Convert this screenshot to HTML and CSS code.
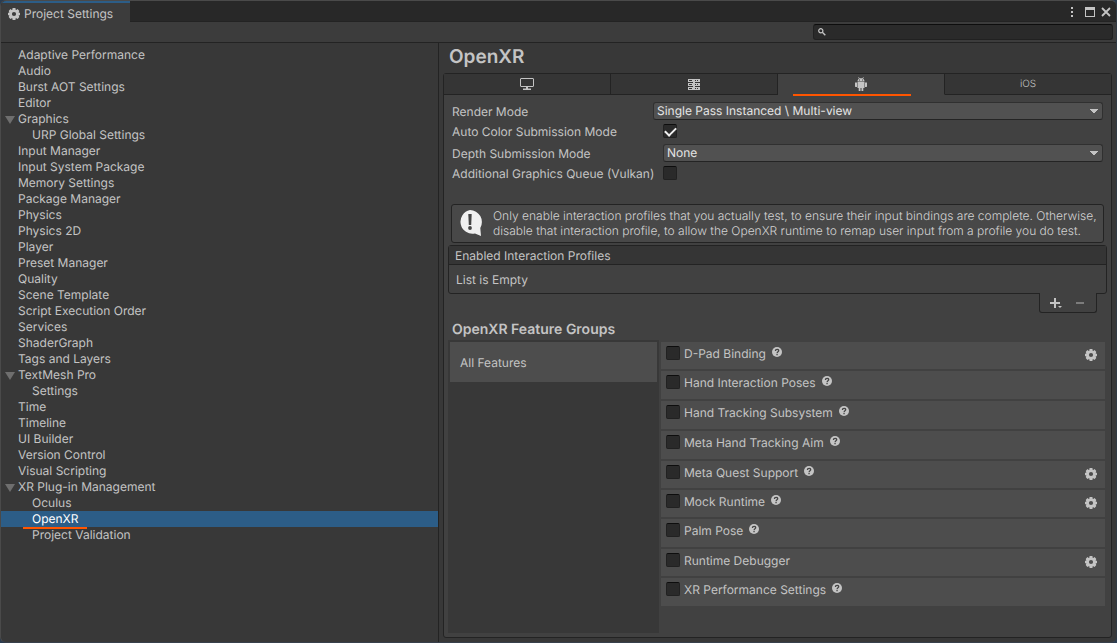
FILE: index.html
```html
<!DOCTYPE html>
<html lang="en">
<head>
<meta charset="utf-8">
<title>Project Settings</title>
<link rel="stylesheet" href="styles.css">
</head>
<body>
<svg class="defs" aria-hidden="true">
  <symbol id="gear" viewBox="0 0 12 12">
    <path fill="currentColor" fill-rule="evenodd" d="M4.500 0h3v1.500l.8.400 1.300-.8 1.700 2-.6 1.200.2.500H12v2.400h-1.100l-.2.600.6 1.300-1.700 1.900-1.300-.8-.8.300V12h-3v-1.500l-.8-.3-1.300.8L.700 9.100l.6-1.300-.2-.6H0V4.800h1.100l.2-.5L.700 3.100l1.700-2 1.300.8.800-.4zM6 3.900a2.100 2.100 0 1 0 0 4.200 2.100 2.100 0 0 0 0-4.200z"/>
  </symbol>
  <symbol id="help" viewBox="0 0 10 10">
    <circle cx="5" cy="5" r="5" fill="currentColor"/>
    <path d="M3.400 3.900C3.400 1.800 6.700 1.800 6.700 3.700 6.700 4.900 5.100 4.800 5.100 6.200" fill="none" stroke="#444" stroke-width="1.300"/>
    <path d="M4.400 7h1.300v1.300H4.400z" fill="#444"/>
  </symbol>
</svg>
<div class="window">
  <header class="titlebar">
    <div class="window-tab"><svg class="icon12"><use href="#gear"/></svg><span>Project Settings</span></div>
    <div class="window-buttons">
      <button type="button" aria-label="Menu"><svg width="4" height="12" viewBox="0 0 4 12"><path fill="currentColor" d="M1 1h2v2H1zM1 5h2v2H1zM1 9h2v2H1z"/></svg></button>
      <button type="button" aria-label="Maximize"><svg width="10" height="10" viewBox="0 0 10 10"><path fill="currentColor" fill-rule="evenodd" d="M0 0h10v10H0zM1 3v6h8V3z"/></svg></button>
      <button type="button" aria-label="Close"><svg width="10" height="10" viewBox="0 0 10 10"><path d="M1 1l8 8M9 1L1 9" stroke="currentColor" stroke-width="1.800"/></svg></button>
    </div>
  </header>
  <div class="toolbar">
    <label class="search"><svg width="8" height="8" viewBox="0 0 8 8"><circle cx="2.800" cy="2.800" r="2.100" fill="none" stroke="currentColor" stroke-width="1.200"/><path d="M4.300 4.300l3 3" stroke="currentColor" stroke-width="1.400"/></svg><input type="text" aria-label="Search settings"></label>
  </div>
  <div class="body">
    <nav class="sidebar">
      <a href="#">Adaptive Performance</a>
      <a href="#">Audio</a>
      <a href="#">Burst AOT Settings</a>
      <a href="#">Editor</a>
      <a href="#" class="group">Graphics</a>
      <a href="#" class="child">URP Global Settings</a>
      <a href="#">Input Manager</a>
      <a href="#">Input System Package</a>
      <a href="#">Memory Settings</a>
      <a href="#">Package Manager</a>
      <a href="#">Physics</a>
      <a href="#">Physics 2D</a>
      <a href="#">Player</a>
      <a href="#">Preset Manager</a>
      <a href="#">Quality</a>
      <a href="#">Scene Template</a>
      <a href="#">Script Execution Order</a>
      <a href="#">Services</a>
      <a href="#">ShaderGraph</a>
      <a href="#">Tags and Layers</a>
      <a href="#" class="group">TextMesh Pro</a>
      <a href="#" class="child">Settings</a>
      <a href="#">Time</a>
      <a href="#">Timeline</a>
      <a href="#">UI Builder</a>
      <a href="#">Version Control</a>
      <a href="#">Visual Scripting</a>
      <a href="#" class="group">XR Plug-in Management</a>
      <a href="#" class="child">Oculus</a>
      <a href="#" class="child selected" aria-current="page">OpenXR</a>
      <a href="#" class="child">Project Validation</a>
    </nav>
    <main class="content">
      <h1>OpenXR</h1>
      <section class="panel">
        <div class="tabs" role="tablist">
          <button type="button" role="tab" aria-label="Standalone"><svg width="14" height="12" viewBox="0 0 14 12"><path fill="currentColor" fill-rule="evenodd" d="M1 0h12l1 1v7l-1 1H8v1.500h3V12H3v-1.500h3V9H1L0 8V1zM1 1v7h12V1z"/></svg></button>
          <button type="button" role="tab" aria-label="Dedicated server"><svg width="12" height="11" viewBox="0 0 12 11"><path fill="currentColor" d="M0 0h12v3H0zM0 4h12v3H0zM0 8h12v3H0zM5 3h2v5H5z"/><path stroke="#353535" d="M1 1.500h3M1 5.500h3M1 9.500h3M7 1.500h1M9 1.500h1M7 5.500h1M9 5.500h1M7 9.500h1M9 9.500h1"/></svg></button>
          <button type="button" role="tab" aria-label="Android" class="active" aria-selected="true"><svg width="12" height="14" viewBox="0 0 12 14"><path fill="currentColor" d="M2.500 4.500C2.500 3 3.200 2 4 1.500L3.200.2l.5-.2.800 1.200h3L8.300 0l.5.2L8 1.500c.8.5 1.500 1.500 1.500 3zM2.500 5h7v6H8.300v3H6.500v-3h-1v3H3.700v-3H2.500zM0 5.500h2V10H.5L0 9.500zM10 5.500h2v4l-.5.500H10z"/><path fill="#414141" d="M4 2.600h1v1H4zM7 2.600h1v1H7z"/></svg></button>
          <button type="button" role="tab" class="ios">iOS</button>
        </div>
        <div class="fields">
          <div class="field"><label for="render">Render Mode</label><div class="control wide"><select id="render"><option>Single Pass Instanced \ Multi-view</option></select></div></div>
          <div class="field check"><label for="color">Auto Color Submission Mode</label><div class="control"><input type="checkbox" id="color" checked></div></div>
          <div class="field"><label for="depth">Depth Submission Mode</label><div class="control"><select id="depth"><option>None</option></select></div></div>
          <div class="field check"><label for="queue">Additional Graphics Queue (Vulkan)</label><div class="control"><input type="checkbox" id="queue"></div></div>
        </div>
        <div class="info">
          <svg width="26" height="28" viewBox="0 0 26 28"><path fill="#f0f0f0" d="M13 1a12 12 0 0 1 10.300 18L24 27l-6-2.500A12 12 0 1 1 13 1z"/><path fill="#444" d="M11.300 5h3.400l-.5 11h-2.400z"/><circle cx="13" cy="19" r="1.900" fill="#444"/></svg>
          <p>Only enable interaction profiles that you actually test, to ensure their input bindings are complete. Otherwise, disable that interaction profile, to allow the OpenXR runtime to remap user input from a profile you do test.</p>
        </div>
        <div class="profiles">
          <div class="profiles-head">Enabled Interaction Profiles</div>
          <div class="profiles-body">List is Empty</div>
        </div>
        <div class="profiles-foot">
          <button type="button" aria-label="Add profile"><svg width="12" height="12" viewBox="0 0 12 12"><path fill="currentColor" d="M4 1h2v4h4v2H6v4H4V7H0V5h4zM8 9h4l-2 2z"/></svg></button>
          <button type="button" aria-label="Remove profile" disabled><svg width="8" height="12" viewBox="0 0 8 12"><path fill="currentColor" d="M0 5h8v2H0z"/></svg></button>
        </div>
        <h2>OpenXR Feature Groups</h2>
        <div class="features">
          <div class="groups"><button type="button">All Features</button></div>
          <ul class="feature-list">
            <li class="has-settings"><label><input type="checkbox">D-Pad Binding</label><svg class="help"><use href="#help"/></svg><button type="button" aria-label="D-Pad Binding settings"><svg class="icon12"><use href="#gear"/></svg></button></li>
            <li><label><input type="checkbox">Hand Interaction Poses</label><svg class="help"><use href="#help"/></svg></li>
            <li><label><input type="checkbox">Hand Tracking Subsystem</label><svg class="help"><use href="#help"/></svg></li>
            <li><label><input type="checkbox">Meta Hand Tracking Aim</label><svg class="help"><use href="#help"/></svg></li>
            <li class="has-settings"><label><input type="checkbox">Meta Quest Support</label><svg class="help"><use href="#help"/></svg><button type="button" aria-label="Meta Quest Support settings"><svg class="icon12"><use href="#gear"/></svg></button></li>
            <li class="has-settings"><label><input type="checkbox">Mock Runtime</label><svg class="help"><use href="#help"/></svg><button type="button" aria-label="Mock Runtime settings"><svg class="icon12"><use href="#gear"/></svg></button></li>
            <li><label><input type="checkbox">Palm Pose</label><svg class="help"><use href="#help"/></svg></li>
            <li class="has-settings"><label><input type="checkbox">Runtime Debugger</label><button type="button" aria-label="Runtime Debugger settings"><svg class="icon12"><use href="#gear"/></svg></button></li>
            <li><label><input type="checkbox">XR Performance Settings</label><svg class="help"><use href="#help"/></svg></li>
          </ul>
        </div>
      </section>
    </main>
  </div>
</div>
</body>
</html>
```
FILE: styles.css
```css
* { box-sizing: border-box; }
body {
  margin: 0;
  background: #2b3c50;
  color: #c4c4c4;
  font: 12px/16px Inter, "Liberation Sans", sans-serif;
  text-rendering: geometricPrecision;
}
button, input, select { font: inherit; color: inherit; margin: 0; text-rendering: inherit; }
button { display: flex; align-items: center; justify-content: center; padding: 0; border: 0; background: none; }
svg { display: block; flex: none; }
h1, h2, p, ul { margin: 0; padding: 0; }
.defs { display: none; }
.icon12 { width: 12px; height: 12px; }

.window {
  display: flex;
  flex-direction: column;
  min-height: 100vh;
  border: 1px solid #4a4a4a;
  border-radius: 6px;
  border-right-color: #303a44;
  border-bottom-color: #38404c;
  background: #383838;
  overflow: hidden;
}
.titlebar {
  display: flex;
  justify-content: space-between;
  height: 21px;
  background: #282828;
  box-shadow: inset 0 -1px #232323;
}
.window-tab {
  display: flex;
  align-items: center;
  gap: 4px;
  width: 129px;
  padding: 2px 0 0 7px;
  background: #3c3c3c;
  border-top: 2px solid #2c5d87;
}
.window-buttons { display: flex; align-items: center; gap: 6px; padding-right: 5px; }
.window-buttons button:first-child { margin-right: 5px; }
.toolbar {
  display: flex;
  justify-content: flex-end;
  height: 21px;
  padding: 2px 3px;
  background: #3c3c3c;
  border-bottom: 1px solid #232323;
}
.search {
  display: flex;
  align-items: center;
  gap: 6px;
  width: 300px;
  height: 16px;
  padding: 0 4px;
  background: #2a2a2a;
  border: 1px solid #212121;
  border-top-color: #0d0d0d;
  border-radius: 3px;
}
.search input { flex: 1; min-width: 0; height: 14px; padding: 0; border: 0; outline: 0; background: none; }

.body { display: flex; flex: 1; }
.sidebar { display: flex; flex-direction: column; width: 437px; padding-top: 4px; }
.sidebar a { position: relative; height: 16px; padding-left: 17px; color: inherit; text-decoration: none; }
.sidebar .child { padding-left: 31px; }
.sidebar .group::before {
  content: "";
  position: absolute;
  top: 5px;
  left: 4px;
  border: 5px solid transparent;
  border-top: 8px solid #6e6e6e;
  border-bottom: 0;
}
.sidebar .selected { background: #2c5d87; color: #fff; }
.sidebar .selected::after {
  content: "";
  position: absolute;
  z-index: 1;
  top: 16px;
  left: 22px;
  width: 64px;
  height: 2px;
  background: #ff5500;
}
.content {
  display: flex;
  flex-direction: column;
  flex: 1;
  min-width: 0;
  padding: 0 4px 4px;
  border-left: 1px solid #232323;
}
h1 { padding: 2px 0 4px 6px; font-size: 19px; line-height: 24px; font-weight: 600; }
.panel {
  display: flex;
  flex-direction: column;
  flex: 1;
  border: 1px solid #232323;
  border-radius: 3px;
  background: #414141;
}
.tabs { display: flex; height: 21px; }
.tabs button {
  position: relative;
  flex: 1;
  background: #353535;
  border-right: 1px solid #232323;
  border-bottom: 1px solid #232323;
}
.tabs button:last-child { border-right: 0; }
.tabs .active { background: #414141; border-bottom-color: #414141; }
.tabs .active::after {
  content: "";
  position: absolute;
  top: 20px;
  left: 15px;
  width: 118px;
  height: 2px;
  background: #ff5500;
}
.tabs .ios { font-size: 10px; font-weight: 300; }

.fields { display: flex; flex-direction: column; gap: 4px; padding: 7px 8px 0; }
.field { display: flex; height: 18px; }
.field label { width: 211px; padding-top: 2px; white-space: nowrap; }
.field.check { height: 16px; }
.field.check label { padding-top: 0; }
.control { flex: 1; min-width: 0; }
.control.wide { margin-left: -10px; }
select {
  appearance: none;
  display: block;
  width: 100%;
  height: 18px;
  padding: 0 20px 0 3px;
  border: 1px solid #303030;
  border-bottom-color: #242424;
  border-radius: 3px;
  background: #515151;
  color: #e4e4e4;
  background-image: linear-gradient(to bottom right, #c4c4c4 50%, transparent 50%), linear-gradient(to bottom left, #c4c4c4 50%, transparent 50%);
  background-size: 4px 5px;
  background-repeat: no-repeat;
  background-position: right 4px top 6px, right 8px top 6px;
}
input[type="checkbox"] {
  appearance: none;
  display: block;
  flex: none;
  width: 14px;
  height: 14px;
  border: 1px solid #212121;
  border-top-color: #0d0d0d;
  border-radius: 2px;
  background: #2a2a2a;
}
input[type="checkbox"]:checked::before {
  content: "";
  display: block;
  width: 9px;
  height: 5px;
  margin: 2px 0 0 1px;
  border: solid #f0f0f0;
  border-width: 0 0 2px 2px;
  transform: rotate(-45deg);
}
.info {
  display: flex;
  align-items: center;
  gap: 10px;
  margin: 22px 7px 0;
  padding: 3px 0 4px 5px;
  border: 1px solid #232323;
  border-radius: 3px;
  background: #484848;
}
.info p { line-height: 15px; font-weight: 300; color: #d2d2d2; }
.profiles { margin: 2px 4px 0; border: 1px solid #232323; border-radius: 3px; }
.profiles-head { height: 19px; padding: 2px 6px; background: #353535; border-bottom: 1px solid #232323; }
.profiles-body { height: 28px; padding: 7px; }
.profiles-foot {
  position: relative;
  display: flex;
  align-items: center;
  align-self: flex-end;
  gap: 14px;
  height: 20px;
  margin: -1px 14px 0;
  padding: 0 12px 0 10px;
  border: 1px solid #232323;
  border-top: 0;
  border-radius: 0 0 3px 3px;
  background: #414141;
}
.profiles-foot button:disabled { color: #7c7c7c; }
h2 { padding: 8px 8px 1px; font-size: 14px; line-height: 18px; font-weight: 600; }
.features { display: flex; flex: 1; gap: 2px; padding: 0 6px 4px 4px; }
.groups { width: 211px; padding: 2px; background: #383838; }
.groups button { justify-content: flex-start; width: 100%; height: 40px; padding: 2px 10px 0; background: #4d4d4d; }
.feature-list { display: flex; flex-direction: column; flex: 1; gap: 2px; padding-top: 2px; list-style: none; }
.feature-list li { display: flex; align-items: flex-start; gap: 6px; height: 28px; padding: 4px 8px 0 5px; background: #4d4d4d; }
.feature-list li.has-settings { height: 27px; }
.feature-list label { display: flex; gap: 4px; }
.feature-list button { margin: 3px 0 0 auto; }
.help { width: 10px; height: 10px; margin-top: 1px; }
```
